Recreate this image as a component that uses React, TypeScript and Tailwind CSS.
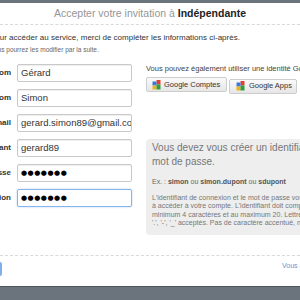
import React from 'react';

const fields = [
  { label: 'Prénom', value: 'Gérard' },
  { label: 'Nom', value: 'Simon' },
  { label: 'Email', value: 'gerard.simon89@gmail.com' },
  { label: 'Identifiant', value: 'gerard89' },
  { label: 'Mot de passe', value: '●●●●●●●', secret: true },
  { label: 'Confirmation', value: '●●●●●●●', secret: true, focus: true },
];

// petit logo Google (blocs de couleur)
function GoogleIcon() {
  return (
    <svg width="9" height="10" viewBox="0 0 9 10" className="shrink-0">
      <path d="M4.5 0h4v4.5h-4z" fill="#e2402f" />
      <path d="M0.5 1.5h4v4h-4z" fill="#3a78de" />
      <path d="M0.5 5.5h4v4h-4z" fill="#f2b21c" />
      <path d="M4.5 4.5h4v5h-4z" fill="#2e9c47" />
    </svg>
  );
}

function GoogleButton({ label, className }: { label: string; className: string }) {
  return (
    <div
      className={`flex items-center gap-[3px] h-[15px] rounded-[2px] border border-[#cdcdcd] bg-gradient-to-b from-[#fafafa] to-[#e6e6e6] text-[7.5px] text-[#333] whitespace-nowrap ${className}`}
    >
      <GoogleIcon />
      <span>{label}</span>
    </div>
  );
}

export default function App() {
  return (
    <div className="w-[300px] h-[300px] overflow-hidden bg-white flex flex-col font-['Liberation_Sans',Arial,sans-serif]">
      <div className="h-[3px] bg-[#6b737d]" />

      {/* titre */}
      <div className="h-[21px] pt-[1px] flex items-center justify-center text-[10.5px] text-[#969696] whitespace-nowrap">
        Accepter votre invitation à&nbsp;<b className="text-[#222]">Indépendante</b>
      </div>

      <div className="border-t border-dashed border-[#d9d9d9] flex flex-col">
        <p className="mt-[8px] -ml-[10px] text-[8px] leading-[10px] text-[#333] whitespace-nowrap">
          Pour accéder au service, merci de compléter les informations ci-après.
        </p>
        <p className="mt-[3px] -ml-[10px] text-[6.5px] leading-[8px] text-[#666] whitespace-nowrap">
          Vous pourrez les modifier par la suite.
        </p>

        <div className="mt-[10px] flex items-start">
          {/* formulaire */}
          <div className="-ml-[49px] grid grid-cols-[60px_115px] gap-x-[6px] gap-y-[7px] shrink-0">
            {fields.map((f) => (
              <React.Fragment key={f.label}>
                <div className="h-[18px] flex items-center justify-end text-[8px] font-bold text-[#333] whitespace-nowrap">
                  {f.label}
                </div>
                <div
                  className={`h-[18px] flex items-center px-[3px] overflow-hidden whitespace-nowrap rounded-[2px] border ${
                    f.focus ? 'border-[#86b4ec] shadow-[0_0_2px_#a6c8f2]' : 'border-[#c9c9c9] shadow-[inset_0_1px_1px_#eee]'
                  } ${f.secret ? "text-[7px] tracking-[0.5px] text-black font-['DejaVu_Sans',sans-serif]" : 'text-[9.5px] text-[#333]'}`}
                >
                  {f.value}
                </div>
              </React.Fragment>
            ))}
          </div>

          {/* colonne droite */}
          <div className="ml-[14px] w-[200px] shrink-0 flex flex-col">
            <p className="text-[7.5px] leading-[9px] text-[#444] whitespace-nowrap">
              Vous pouvez également utiliser une identité Google :
            </p>
            <div className="mt-[4px] flex items-start gap-[2px]">
              <GoogleButton label="Google Comptes" className="w-[81px] pl-[5px]" />
              <GoogleButton label="Google Apps" className="w-[68px] pl-[6px] mt-[1.5px] gap-[4px]" />
            </div>

            <div className="mt-[45.5px] h-[96px] rounded-[4px] bg-[#eeeeee] pl-[6px] pt-[2px] whitespace-nowrap">
              <p className="text-[10px] leading-[14px] text-[#777]">
                Vous devez vous créer un identifiant et un
                <br />
                mot de passe.
              </p>
              <p className="mt-[8px] text-[7px] leading-[9px] text-[#666]">
                Ex. : <b className="text-[#555]">simon</b> ou <b className="text-[#555]">simon.dupont</b> ou{' '}
                <b className="text-[#555]">sdupont</b>
              </p>
              <div className="mt-[8px] text-[7px] leading-[8.4px] text-[#777]">
                <p>L'identifiant de connexion et le mot de passe vous serviront</p>
                <p>à accéder à votre compte. L'identifiant doit comporter au</p>
                <p>minimum 4 caractères et au maximum 20. Lettres, chiffres et</p>
                <p>'.', '-', '_' acceptés. Pas de caractère accentué, ni d'espace.</p>
              </div>
            </div>
          </div>
        </div>
      </div>

      {/* pied */}
      <div className="mt-[20px] h-[31px] border-t border-dashed border-[#d9d9d9] flex items-start">
        <div className="mt-[6px] -ml-[38px] w-[40px] h-[14px] rounded-[2px] bg-[#7eb0ea] shrink-0" />
        <a className="mt-[4.5px] ml-[280px] text-[7px] leading-[9px] text-[#5e95d6] whitespace-nowrap">
          Vous avez déjà un compte ?
        </a>
      </div>

      <div className="flex-1 border-t border-[#4f555d] bg-[#6b737d]" />
    </div>
  );
}
